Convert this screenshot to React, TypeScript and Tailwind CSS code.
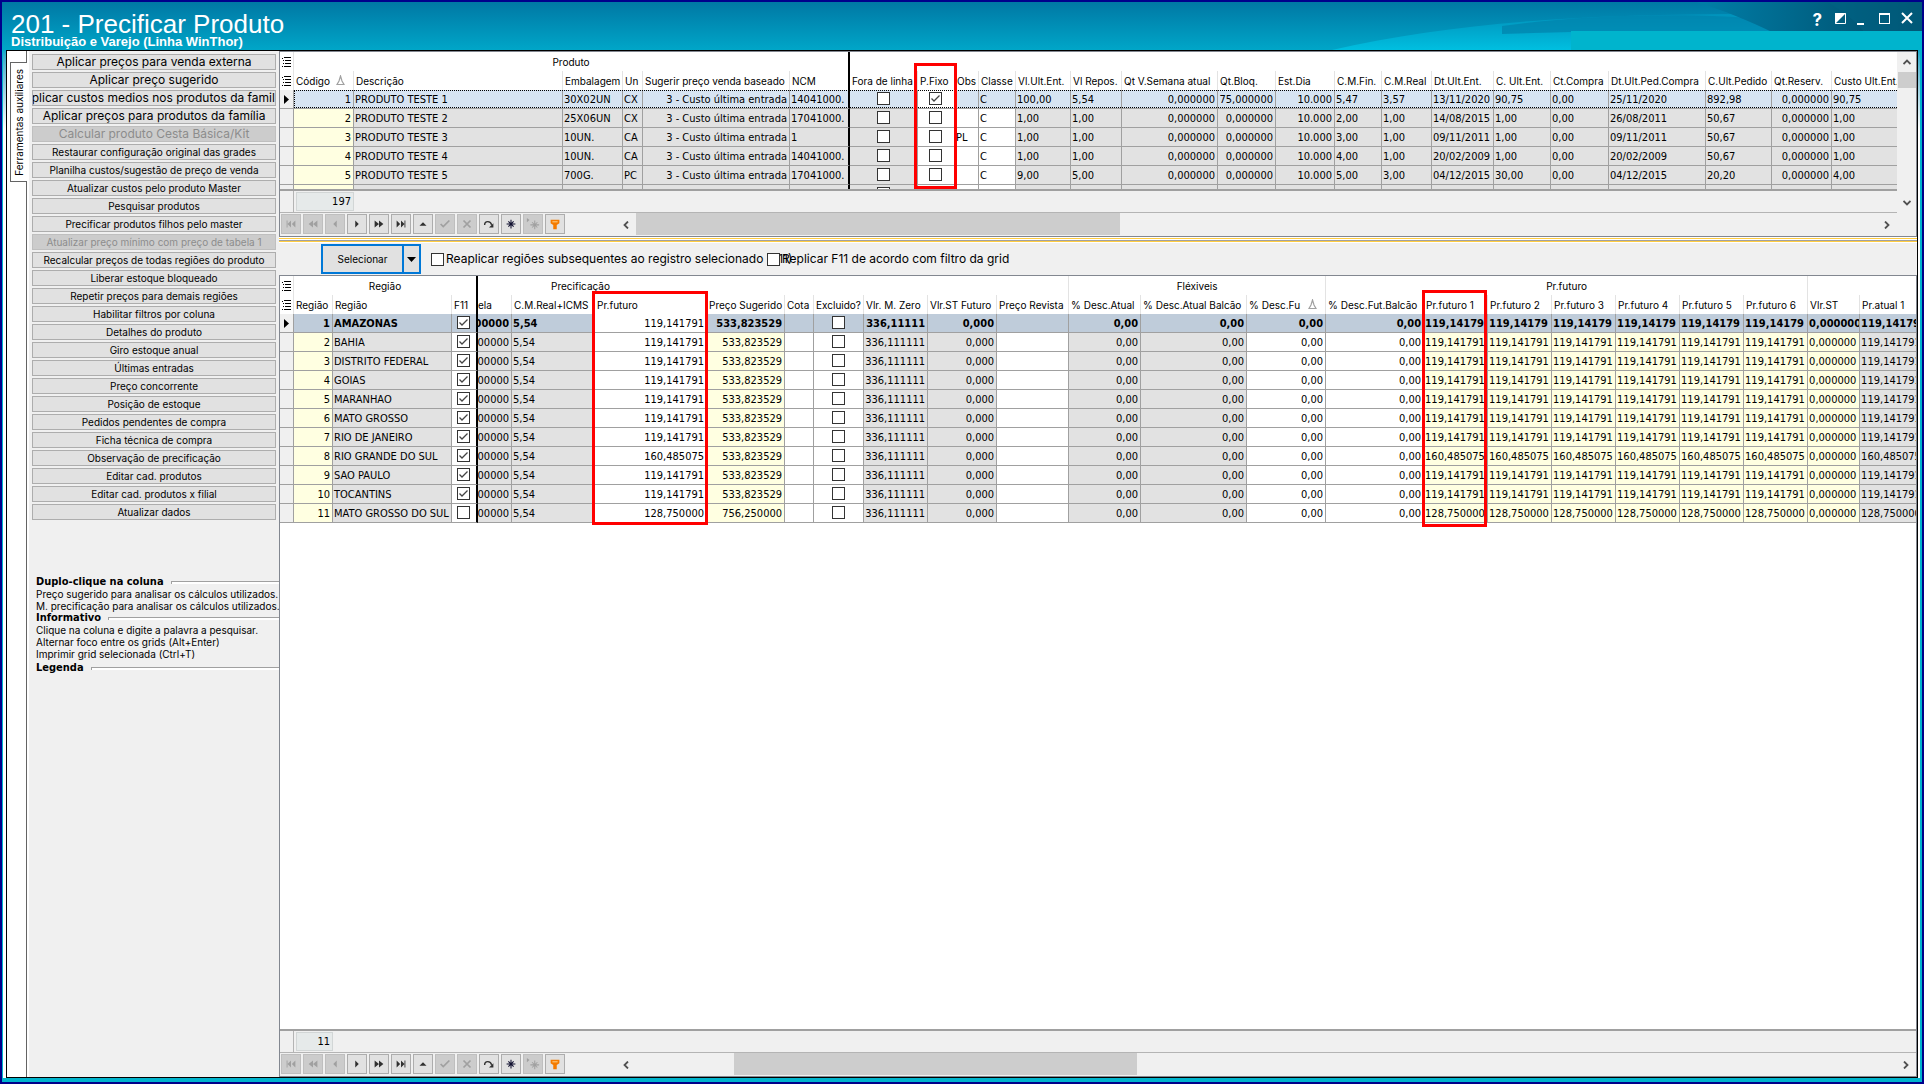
import { useState } from 'react'
import type { ReactNode } from 'react'
import clsx from 'clsx'

type Tone = 'gray' | 'yellow' | 'white'

type Column = {
  title: string
  width: number
  align?: 'left' | 'right'
  check?: boolean
  tone: Tone
  keepWhite?: boolean
  sorted?: boolean
  divider?: boolean
}

const tones: Record<Tone, string> = {
  gray: 'bg-[#e2e2e2]',
  yellow: 'bg-[#ffffe1]',
  white: 'bg-white',
}

const productColumns: Column[] = [
  { title: 'Código', width: 60, align: 'right', tone: 'yellow', sorted: true },
  { title: 'Descrição', width: 209, tone: 'gray' },
  { title: 'Embalagem', width: 60, tone: 'gray' },
  { title: 'Un', width: 20, tone: 'gray' },
  { title: 'Sugerir preço venda baseado', width: 147, align: 'right', tone: 'gray' },
  { title: 'NCM', width: 60, tone: 'gray', divider: true },
  { title: 'Fora de linha', width: 68, check: true, tone: 'gray' },
  { title: 'P.Fixo', width: 37, check: true, tone: 'white', keepWhite: true },
  { title: 'Obs', width: 24, tone: 'white' },
  { title: 'Classe', width: 37, tone: 'white' },
  { title: 'Vl.Ult.Ent.', width: 55, tone: 'gray' },
  { title: 'Vl Repos.', width: 51, tone: 'gray' },
  { title: 'Qt V.Semana atual', width: 96, align: 'right', tone: 'gray' },
  { title: 'Qt.Bloq.', width: 58, align: 'right', tone: 'gray' },
  { title: 'Est.Dia', width: 59, align: 'right', tone: 'gray' },
  { title: 'C.M.Fin.', width: 47, tone: 'gray' },
  { title: 'C.M.Real', width: 50, tone: 'gray' },
  { title: 'Dt.Ult.Ent.', width: 62, tone: 'gray' },
  { title: 'C. Ult.Ent.', width: 57, tone: 'gray' },
  { title: 'Ct.Compra', width: 58, tone: 'gray' },
  { title: 'Dt.Ult.Ped.Compra', width: 97, tone: 'gray' },
  { title: 'C.Ult.Pedido', width: 66, tone: 'gray' },
  { title: 'Qt.Reserv.', width: 60, align: 'right', tone: 'gray' },
  { title: 'Custo Ult.Ent.', width: 90, tone: 'gray' },
]

const base = '3 - Custo última entrada'

const products: (string | boolean)[][] = [
  ['1', 'PRODUTO TESTE 1', '30X02UN', 'CX', base, '14041000.', false, true, '', 'C', '100,00', '5,54', '0,000000', '75,000000', '10.000', '5,47', '3,57', '13/11/2020', '90,75', '0,00', '25/11/2020', '892,98', '0,000000', '90,75'],
  ['2', 'PRODUTO TESTE 2', '25X06UN', 'CX', base, '17041000.', false, false, '', 'C', '1,00', '1,00', '0,000000', '0,000000', '10.000', '2,00', '1,00', '14/08/2015', '1,00', '0,00', '26/08/2011', '50,67', '0,000000', '1,00'],
  ['3', 'PRODUTO TESTE 3', '10UN.', 'CA', base, '1', false, false, 'PL', 'C', '1,00', '1,00', '0,000000', '0,000000', '10.000', '3,00', '1,00', '09/11/2011', '1,00', '0,00', '09/11/2011', '50,67', '0,000000', '1,00'],
  ['4', 'PRODUTO TESTE 4', '10UN.', 'CA', base, '14041000.', false, false, '', 'C', '1,00', '1,00', '0,000000', '0,000000', '10.000', '4,00', '1,00', '20/02/2009', '1,00', '0,00', '20/02/2009', '50,67', '0,000000', '1,00'],
  ['5', 'PRODUTO TESTE 5', '700G.', 'PC', base, '17041000.', false, false, '', 'C', '9,00', '5,00', '0,000000', '0,000000', '10.000', '5,00', '3,00', '04/12/2015', '30,00', '0,00', '04/12/2015', '20,20', '0,000000', '4,00'],
  ['', '', '', '', '', '', false, false, '', '', '', '', '', '', '', '', '', '', '', '', '', '', '', ''],
]

const regionColumns: Column[] = [
  { title: 'Região', width: 39, align: 'right', tone: 'yellow' },
  { title: 'Região', width: 119, tone: 'gray' },
  { title: 'F11', width: 26, check: true, tone: 'white', divider: true },
  { title: 'ela', width: 34, align: 'right', tone: 'gray' },
  { title: 'C.M.Real+ICMS', width: 83, tone: 'gray' },
  { title: 'Pr.futuro', width: 112, align: 'right', tone: 'white', keepWhite: true },
  { title: 'Preço Sugerido', width: 78, align: 'right', tone: 'yellow' },
  { title: 'Cota', width: 29, tone: 'white' },
  { title: 'Excluido?', width: 50, check: true, tone: 'white' },
  { title: 'Vlr. M. Zero', width: 64, align: 'right', tone: 'gray' },
  { title: 'Vlr.ST Futuro', width: 69, align: 'right', tone: 'gray' },
  { title: 'Preço Revista', width: 72, tone: 'white' },
  { title: '% Desc.Atual', width: 72, align: 'right', tone: 'gray' },
  { title: '% Desc.Atual Balcão', width: 106, align: 'right', tone: 'gray' },
  { title: '% Desc.Fu', width: 79, align: 'right', tone: 'white', sorted: true },
  { title: '% Desc.Fut.Balcão', width: 98, align: 'right', tone: 'white' },
  { title: 'Pr.futuro 1', width: 64, tone: 'yellow' },
  { title: 'Pr.futuro 2', width: 64, tone: 'yellow' },
  { title: 'Pr.futuro 3', width: 64, tone: 'yellow' },
  { title: 'Pr.futuro 4', width: 64, tone: 'yellow' },
  { title: 'Pr.futuro 5', width: 64, tone: 'yellow' },
  { title: 'Pr.futuro 6', width: 64, tone: 'yellow' },
  { title: 'Vlr.ST', width: 52, tone: 'yellow' },
  { title: 'Pr.atual 1', width: 90, tone: 'gray' },
]

const regionNames: [string, string][] = [
  ['AMAZONAS', '119,141791'],
  ['BAHIA', '119,141791'],
  ['DISTRITO FEDERAL', '119,141791'],
  ['GOIAS', '119,141791'],
  ['MARANHAO', '119,141791'],
  ['MATO GROSSO', '119,141791'],
  ['RIO DE JANEIRO', '119,141791'],
  ['RIO GRANDE DO SUL', '160,485075'],
  ['SAO PAULO', '119,141791'],
  ['TOCANTINS', '119,141791'],
  ['MATO GROSSO DO SUL', '128,750000'],
]

const regions: (string | boolean)[][] = regionNames.map(([name, price], i) => {
  const last = i === regionNames.length - 1
  const short = i === 0 ? price.slice(0, -1) : price
  return [
    String(i + 1), name, !last, '00000', '5,54', price,
    last ? '756,250000' : '533,823529', '', false, i === 0 ? '336,11111' : '336,111111', '0,000', '',
    '0,00', '0,00', '0,00', '0,00',
    short, short, short, short, short, short, '0,000000', price,
  ]
})

const tools: { label: string; large?: boolean; disabled?: boolean }[] = [
  { label: 'Aplicar preços para venda externa', large: true },
  { label: 'Aplicar preço sugerido', large: true },
  { label: 'Aplicar custos medios nos produtos da familia', large: true },
  { label: 'Aplicar preços para produtos da família', large: true },
  { label: 'Calcular produto Cesta Básica/Kit', large: true, disabled: true },
  { label: 'Restaurar configuração original das grades' },
  { label: 'Planilha custos/sugestão de preço de venda' },
  { label: 'Atualizar custos pelo produto Master' },
  { label: 'Pesquisar produtos' },
  { label: 'Precificar produtos filhos pelo master' },
  { label: 'Atualizar preço mínimo com preço de tabela 1', disabled: true },
  { label: 'Recalcular preços de todas regiões do produto' },
  { label: 'Liberar estoque bloqueado' },
  { label: 'Repetir preços para demais regiões' },
  { label: 'Habilitar filtros por coluna' },
  { label: 'Detalhes do produto' },
  { label: 'Giro estoque anual' },
  { label: 'Últimas entradas' },
  { label: 'Preço concorrente' },
  { label: 'Posição de estoque' },
  { label: 'Pedidos pendentes de compra' },
  { label: 'Ficha técnica de compra' },
  { label: 'Observação de precificação' },
  { label: 'Editar cad. produtos' },
  { label: 'Editar cad. produtos x filial' },
  { label: 'Atualizar dados' },
]

function Checkbox({ checked = false, label, id }: { checked?: boolean; label?: string; id?: string }) {
  return (
    <span className="inline-grid size-[13px] shrink-0 align-top">
      <input
        id={id}
        type="checkbox"
        defaultChecked={checked}
        aria-label={label}
        className="peer col-start-1 row-start-1 size-[13px] appearance-none border border-[#333333] bg-white"
      />
      <svg viewBox="0 0 13 13" className="pointer-events-none invisible col-start-1 row-start-1 size-[13px] peer-checked:visible">
        <path d="M2.5 6.5 L5 9 L10.5 3.5" fill="none" stroke="#444" strokeWidth="1.3" />
      </svg>
    </span>
  )
}

function SortMark() {
  return (
    <svg viewBox="0 0 9 11" className="h-[11px] w-[9px] shrink-0">
      <path d="M4.5 1 L6 6 L8 9.5 H1 L3 6 Z" fill="none" stroke="#a0a0a0" strokeWidth="1.2" />
    </svg>
  )
}

function ListMark() {
  return (
    <svg viewBox="0 0 9 10" className="mx-auto h-[10px] w-[9px]" shapeRendering="crispEdges">
      <path d="M0 1.5h1M2 .5h7M1 3.5h1M3 3.5h6M1 6.5h1M3 6.5h6M0 9.5h1M2 9.5h7" stroke="#000" />
    </svg>
  )
}

function Grid({ columns, rows, bands, boldFirst, name }: {
  columns: Column[]
  rows: (string | boolean)[][]
  bands: { title: string; span: number; offset?: boolean }[]
  boldFirst?: boolean
  name: string
}) {
  const total = columns.reduce((sum, c) => sum + c.width, 14)
  const dividerAt = columns.findIndex((c) => c.divider)

  return (
    <table aria-label={name} className="table-fixed border-separate border-spacing-0 text-[11px]" style={{ width: total }}>
      <colgroup>
        <col style={{ width: 14 }} />
        {columns.map((c, i) => <col key={i} style={{ width: c.width }} />)}
      </colgroup>
      <thead className="bg-white font-[Inter,sans-serif] text-[10px]">
        <tr className="h-[19px]">
          <th className="border-r border-[#e3e3e3] p-0"><ListMark /></th>
          {bands.map((b, i) => (
            <th
              key={i}
              colSpan={b.span}
              className={clsx(
                'whitespace-nowrap p-0 font-normal leading-[18px]',
                i === 0 ? 'border-r-2 border-black' : 'border-r border-[#e3e3e3]',
                b.offset ? 'pl-[73px] text-left' : 'text-center',
              )}
            >
              {b.title}
            </th>
          ))}
        </tr>
        <tr className="h-[19px]">
          <th className="border-r border-[#e3e3e3] p-0"><ListMark /></th>
          {columns.map((c, i) => (
            <th
              key={i}
              className={clsx(
                'overflow-hidden whitespace-nowrap p-0 text-left font-normal leading-[18px]',
                c.divider ? 'border-r-2 border-black' : 'border-r border-[#e3e3e3]',
                i === dividerAt + 1 && boldFirst ? 'pl-0' : 'pl-0.5',
              )}
            >
              <span className={clsx('flex items-center', c.sorted && 'justify-between pr-2')}>
                {c.title}
                {c.sorted && <SortMark />}
              </span>
            </th>
          ))}
        </tr>
      </thead>
      <tbody className="font-['DejaVu_Sans_Condensed',sans-serif]">
        {rows.map((row, r) => (
          <tr key={r} className={clsx('h-[19px]', r === 0 && boldFirst && 'font-bold')}>
            <td className="border-b border-r border-[#a0a0a0] bg-[#f0f0f0] p-0">
              {r === 0 && (
                <svg viewBox="0 0 5 9" className="mx-auto h-[9px] w-[5px]"><path d="M0 0 L5 4.5 L0 9Z" /></svg>
              )}
            </td>
            {columns.map((c, i) => (
              <td
                key={i}
                className={clsx(
                  'overflow-hidden whitespace-nowrap border-b border-b-[#a0a0a0] p-0 leading-[17px]',
                  c.align === 'right' ? 'pr-0.5' : !c.check && 'pl-px',
                  c.check ? 'pr-px' : 'pt-px',
                  c.divider ? 'border-r-2 border-r-black' : 'border-r border-r-[#a0a0a0]',
                  r > 0 || c.keepWhite ? tones[c.tone] : boldFirst ? 'bg-[#bfccda]' : 'bg-[#d7e4f2]',
                  r === 0 && c.keepWhite && 'font-normal',
                )}
              >
                {c.check ? (
                  <span className="flex justify-center pb-px"><Checkbox checked={Boolean(row[i])} label={`${c.title} ${r + 1}`} /></span>
                ) : (
                  <span className={clsx('flex', c.align === 'right' && 'justify-end')}>{row[i]}</span>
                )}
              </td>
            ))}
          </tr>
        ))}
      </tbody>
    </table>
  )
}

const navItems: { name: string; disabled?: boolean; icon: ReactNode }[] = [
  { name: 'Primeiro', disabled: true, icon: <path d="M3 4h1v8h-1zM8 4v8L4 8zM13 4v8L9 8z" /> },
  { name: 'Página anterior', disabled: true, icon: <path d="M8 4v8L3 8zM13 4v8L8 8z" /> },
  { name: 'Anterior', disabled: true, icon: <path d="M10 4v8L6 8z" /> },
  { name: 'Próximo', icon: <path d="M6 4v8L10 8z" /> },
  { name: 'Próxima página', icon: <path d="M3 4v8L8 8zM8 4v8L13 8z" /> },
  { name: 'Último', icon: <path d="M3 4v8L7 8zM8 4v8L12 8zM12 4h1v8h-1z" /> },
  { name: 'Editar', icon: <path d="M4 10h8L8 6z" /> },
  { name: 'Gravar', disabled: true, icon: <path d="M3 8l3 3 7-7" fill="none" stroke="currentColor" strokeWidth="2" /> },
  { name: 'Cancelar', disabled: true, icon: <path d="M4 4l8 8M12 4l-8 8" fill="none" stroke="currentColor" strokeWidth="2" /> },
  { name: 'Atualizar', icon: <g><path d="M3 9c0-5 7-5 8 0" fill="none" stroke="currentColor" strokeWidth="1.6" /><path d="M13 7v5H8z" /></g> },
  { name: 'Marcar', icon: <path d="M8 3v10M3 8h10M5 5l6 6M11 5l-6 6" fill="none" stroke="#101030" strokeWidth="1.2" /> },
  { name: 'Ir para marca', disabled: true, icon: <g><path d="M10 4v10M5 9h10M7 6l6 6M13 6l-6 6" fill="none" stroke="currentColor" strokeWidth="1.2" /><path d="M1 1v5l3-2.5z" /></g> },
  { name: 'Filtro', icon: <g><path d="M3 3h10v4l-3 2v5H6V9L3 7z" fill="#f47b00" /><path d="M5 5.500h6" stroke="#ffe0a0" /></g> },
]

function NavBar({ thumbClass }: { thumbClass: string }) {
  return (
    <div className="flex h-[23px] items-stretch bg-[#f0f0f0]">
      <div className="flex w-[336px] shrink-0 gap-0.5 px-px pb-0.5 pt-px">
        {navItems.map((item) => (
          <button
            key={item.name}
            type="button"
            aria-label={item.name}
            disabled={item.disabled}
            className="grid size-5 place-items-center border border-[#adadad] bg-[#e1e1e1] text-[#303030] disabled:border-[#bfbfbf] disabled:bg-[#cccccc] disabled:text-[#a0a0a0]"
          >
            <svg viewBox="0 0 16 16" className="size-3.5" fill="currentColor">
              {item.icon}
            </svg>
          </button>
        ))}
      </div>
      <div className="flex flex-1 items-stretch">
        <button type="button" aria-label="Rolar à esquerda" className="grid w-5 place-items-center">
          <svg viewBox="0 0 6 8" className="h-2 w-1.5"><path d="M5 .5 L1.500 4 L5 7.500" fill="none" stroke="#505050" strokeWidth="1.8" /></svg>
        </button>
        <div className="flex flex-1"><div className={clsx('mb-px bg-[#cdcdcd]', thumbClass)} /></div>
        <button type="button" aria-label="Rolar à direita" className="grid w-5 place-items-center">
          <svg viewBox="0 0 6 8" className="h-2 w-1.5"><path d="M1 .5 L4.500 4 L1 7.500" fill="none" stroke="#505050" strokeWidth="1.8" /></svg>
        </button>
      </div>
    </div>
  )
}

function Footer({ count, narrow }: { count: number; narrow?: boolean }) {
  return (
    <div className="flex h-[22px] shrink-0 border-b border-[#b4b4b4] bg-[#f0f0f0] font-['DejaVu_Sans_Condensed',sans-serif] text-[11px]">
      <div className="w-3.5 border-r border-[#b4b4b4]" />
      <output className={clsx('my-px ml-0.5 border border-[#d2d6d6] bg-[#e6eaea] pr-0.5 text-right leading-[18px]', narrow ? 'w-[37px]' : 'w-[58px]')}>
        {count}
      </output>
    </div>
  )
}

function InfoGroup({ title, lines }: { title: string; lines: string[] }) {
  return (
    <section className="last:pt-0.5">
      <h2 className="flex h-3 items-center gap-[7px] font-['DejaVu_Sans_Condensed',sans-serif] text-[11px] font-bold">
        {title}
        <span className="h-[3px] flex-1 border-l border-t border-[#a0a0a0] bg-white" />
      </h2>
      {lines.map((l) => <p key={l} className="h-3 whitespace-nowrap leading-3">{l}</p>)}
    </section>
  )
}

function TitleBar() {
  return (
    <header className="relative flex h-12 shrink-0 items-start justify-between overflow-hidden bg-linear-to-b from-[#0078a4] to-[#00a6c8] text-white">
      <svg viewBox="0 0 1920 48" preserveAspectRatio="none" className="absolute inset-0 size-full">
        <defs>
          <linearGradient id="glow" x1="0" y1="0" x2="0" y2="1">
            <stop offset="0" stopColor="#0092bb" />
            <stop offset="1" stopColor="#00bfe0" />
          </linearGradient>
          <linearGradient id="dusk" x1="0" y1="0" x2="1" y2="0">
            <stop offset="0" stopColor="#007ea8" />
            <stop offset="1" stopColor="#004a66" />
          </linearGradient>
        </defs>
        <path d="M1330 48 C1480 14 1640 8 1920 14 V48Z" fill="url(#glow)" />
        <path d="M1500 24 C1620 8 1760 10 1860 30 L1570 30 L1500 32Z" fill="#0081ab" opacity=".7" />
        <path d="M1695 0 H1920 V30 H1770 C1750 20 1720 8 1695 0Z" fill="url(#dusk)" />
        <path d="M1825 0 C1840 8 1855 20 1862 30 H1920 V0Z" fill="#006384" opacity=".6" />
        <path d="M1569 29H1920V48H1569Z" fill="#00b4cd" />
      </svg>
      <div className="relative pl-[9px] pt-2.5">
        <h1 className="font-['Liberation_Sans',sans-serif] text-[26px] leading-6">201 - Precificar Produto</h1>
        <p className="font-['Liberation_Sans',sans-serif] text-[13px] font-bold leading-3">Distribuição e Varejo (Linha WinThor)</p>
      </div>
      <div className="relative flex items-center gap-[11px] pr-[9px] pt-1.5">
        <button type="button" aria-label="Ajuda" className="pr-0.5 pt-1 text-[17px] font-bold leading-4">?</button>
        <button type="button" aria-label="Alternar tema">
          <svg viewBox="0 0 11 11" className="size-[11px]"><path d="M.5 .5h10v10H.5z" fill="none" stroke="#fff" /><path d="M0 11V0h11z" fill="#fff" /></svg>
        </button>
        <button type="button" aria-label="Minimizar" className="h-3.5 w-[7px] border-b-2 border-white" />
        <button type="button" aria-label="Maximizar" className="ml-1 h-[11px] w-[11px] border border-t-2 border-white" />
        <button type="button" aria-label="Fechar">
          <svg viewBox="0 0 12 12" className="size-3"><path d="M1 1l10 10M11 1L1 11" stroke="#fff" strokeWidth="2" /></svg>
        </button>
      </div>
    </header>
  )
}

function Sidebar() {
  return (
    <aside className="flex shrink-0">
      <div className="flex w-5 flex-col bg-white">
        <div className="h-[11px] border-r border-[#646464]" />
        <button
          type="button"
          className="ml-[3px] grid h-[120px] place-items-center border border-r-0 border-[#646464] text-[10px]"
        >
          <span className="rotate-180 whitespace-nowrap leading-4 [writing-mode:vertical-rl]">Ferramentas auxiliares</span>
        </button>
        <div className="flex-1 border-r border-[#646464]" />
      </div>
      <div className="ml-0.5 w-[250px] overflow-hidden bg-[#f0f0f0]">
        <div className="flex flex-col gap-0.5 pl-[3px] pr-[3px] pt-[3px]">
          {tools.map((t) => (
            <button
              key={t.label}
              type="button"
              disabled={t.disabled}
              className={clsx(
                'flex h-4 items-center justify-center overflow-hidden whitespace-nowrap border border-[#adadad] bg-[#e1e1e1] px-px disabled:border-[#bfbfbf] disabled:bg-[#cccccc] disabled:text-[#8c8c8c]',
                t.large ? 'text-[12px] leading-4' : 'text-[10px] leading-[14px]',
              )}
            >
              {t.label}
            </button>
          ))}
        </div>
        <div className="pl-[7px] pt-14 text-[10px]">
          <InfoGroup
            title="Duplo-clique na coluna"
            lines={['Preço sugerido para analisar os cálculos utilizados.', 'M. precificação para analisar os cálculos utilizados.']}
          />
          <InfoGroup
            title="Informativo"
            lines={['Clique na coluna e digite a palavra a pesquisar.', 'Alternar foco entre os grids (Alt+Enter)', 'Imprimir grid selecionada (Ctrl+T)']}
          />
          <InfoGroup title="Legenda" lines={[]} />
        </div>
      </div>
    </aside>
  )
}

function Toolbar() {
  const [open, setOpen] = useState(false)
  return (
    <div className="flex h-8 shrink-0 items-center bg-[#f0f0f0] pl-[42px] text-[12px]">
      <button type="button" className="h-[30px] w-[83px] border-2 border-[#0078d7] bg-[#e1e1e1] text-[10px]">Selecionar</button>
      <button
        type="button"
        aria-label="Opções"
        aria-expanded={open}
        onClick={() => setOpen(!open)}
        className="grid h-[30px] w-[17px] place-items-center border-2 border-l-0 border-[#0078d7] bg-[#e1e1e1]"
      >
        <svg viewBox="0 0 9 5" className="h-[5px] w-[9px]"><path d="M0 0h9L4.500 5z" /></svg>
      </button>
      <label htmlFor="reaplicar" className="ml-2.5 flex w-[336px] items-center gap-0.5 whitespace-nowrap">
        <Checkbox id="reaplicar" />
        Reaplicar regiões subsequentes ao registro selecionado (F11)
      </label>
      <label htmlFor="replicar" className="relative flex items-center gap-0.5 whitespace-nowrap">
        <Checkbox id="replicar" />
        Replicar F11 de acordo com filtro da grid
      </label>
    </div>
  )
}

export default function App() {
  return (
    <div className="flex h-screen flex-col overflow-hidden border-2 border-[#00008b] bg-[#00b4cd] font-[Inter,sans-serif] text-black">
      <TitleBar />
      <div className="flex min-h-0 flex-1 border-l border-r-2 border-[#00b4cd] bg-linear-to-b from-[#00a6c8] to-white to-[80px] pl-[3px] pr-0.5">
        <div className="flex min-w-0 flex-1 border border-black bg-white">
          <Sidebar />
          <main className="flex min-w-0 flex-1 flex-col">
            <section className="shrink-0 border border-[#828790]">
              <div className="flex">
                <div className="min-w-0 flex-1">
                  <div className="relative h-[139px] overflow-hidden border-b-2 border-[#a0a0a0]">
                    <Grid
                      name="Produtos"
                      columns={productColumns}
                      rows={products}
                      bands={[{ title: 'Produto', span: 6 }, { title: '', span: 18 }]}
                    />
                    <div className="pointer-events-none absolute left-3.5 right-0 top-[38px] h-[18px] border border-r-0 border-dotted border-black" />
                    <div className="pointer-events-none absolute left-[634px] top-[11px] h-[126px] w-[43px] border-3 border-[#ff0000]" />
                  </div>
                  <Footer count={197} />
                </div>
                <div className="flex w-[19px] flex-col items-center bg-[#f0f0f0]">
                  <button type="button" aria-label="Rolar para cima" className="grid h-5 w-full place-items-center">
                    <svg viewBox="0 0 8 6" className="h-1.5 w-2"><path d="M.5 5 L4 1.500 L7.500 5" fill="none" stroke="#505050" strokeWidth="1.8" /></svg>
                  </button>
                  <div className="h-4 w-[18px] bg-[#cdcdcd]" />
                  <div className="flex-1" />
                  <button type="button" aria-label="Rolar para baixo" className="grid h-5 w-full place-items-center">
                    <svg viewBox="0 0 8 6" className="h-1.5 w-2"><path d="M.5 1 L4 4.500 L7.500 1" fill="none" stroke="#505050" strokeWidth="1.8" /></svg>
                  </button>
                </div>
              </div>
              <div className="bg-[#f0f0f0] pr-[19px]"><NavBar thumbClass="w-[39%]" /></div>
            </section>
            <div className="shrink-0 border-y border-white bg-white">
              <div className="h-px bg-[#ffcc40]" />
              <div className="mt-px h-px bg-[#a0a0a0]" />
              <div className="h-px bg-[#ffcc40]" />
            </div>
            <Toolbar />
            <section className="flex min-h-0 flex-1 flex-col border border-[#828790]">
              <div className="relative min-h-0 flex-1 overflow-hidden border-b-2 border-[#a0a0a0]">
                <Grid
                  name="Regiões"
                  boldFirst
                  columns={regionColumns}
                  rows={regions}
                  bands={[
                    { title: 'Região', span: 3 },
                    { title: 'Precificação', span: 9, offset: true },
                    { title: 'Fléxiveis', span: 3 },
                    { title: 'Pr.futuro', span: 7 },
                    { title: '', span: 2 },
                  ]}
                />
                <div className="pointer-events-none absolute left-[312px] top-[15px] h-[234px] w-[116px] border-3 border-[#ff0000]" />
                <div className="pointer-events-none absolute left-[1142px] top-[14px] h-[237px] w-[65px] border-3 border-[#ff0000]" />
              </div>
              <Footer count={11} narrow />
              <NavBar thumbClass="ml-[98px] w-[32%]" />
            </section>
          </main>
        </div>
      </div>
      <div className="h-1 shrink-0 bg-[#00b4cd]" />
    </div>
  )
}
